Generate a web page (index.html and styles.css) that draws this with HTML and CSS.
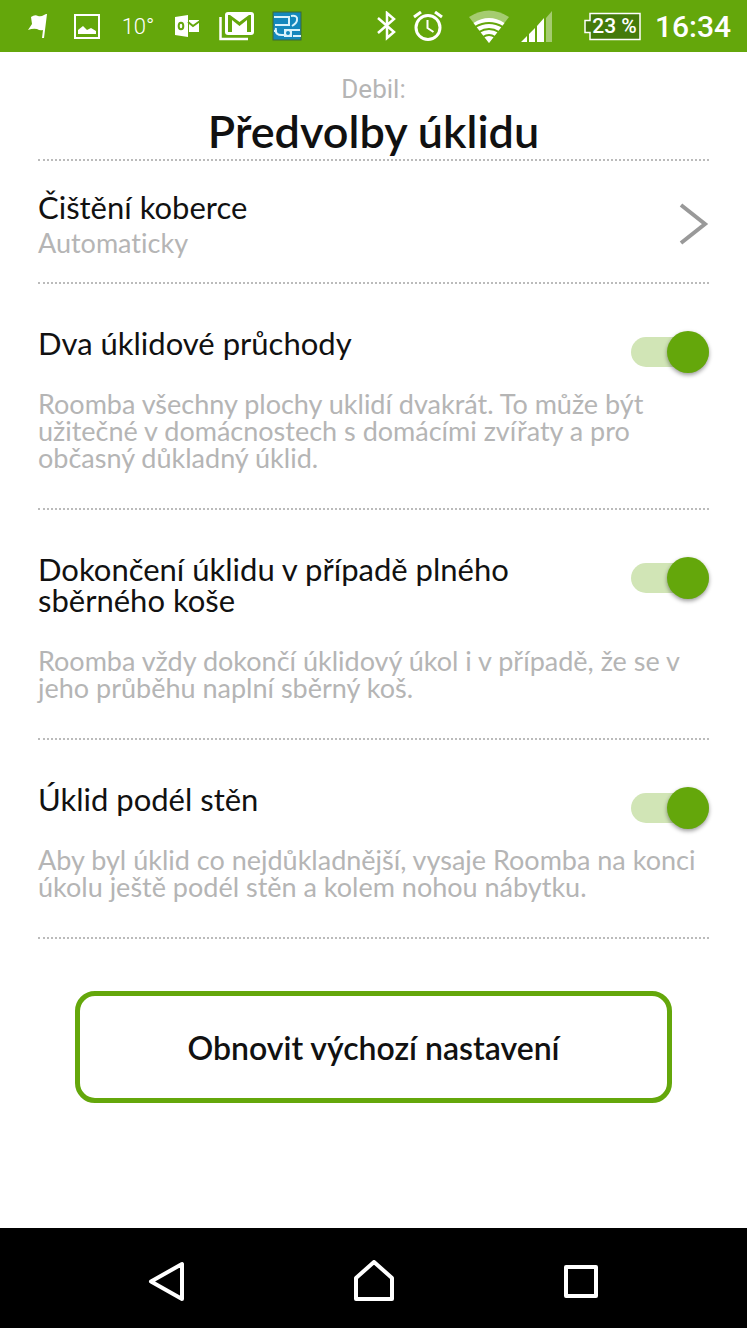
FILE: index.html
```
<!DOCTYPE html>
<html lang="cs">
<head>
<meta charset="utf-8">
<meta name="viewport" content="width=device-width, initial-scale=1">
<title>Předvolby úklidu</title>
<link rel="stylesheet" href="styles.css">
</head>
<body>
<header class="status">
  <div class="status-left">
    <svg width="30" height="30" viewBox="0 0 30 30" fill="#fff"><path d="M3 6q4-3 7-1 3 1 6-1l2-1h1l-3 24h-2l1-8q-3 1-6-1-4-1-9 1l4-6z"/></svg>
    <svg width="30" height="30" viewBox="0 0 30 30" fill="none"><path d="M1 4h24v23H1z" stroke="#fff" stroke-width="2"/><path d="M4 23v-4l5-4 4 4 4-2 5 3v3z" fill="#fff"/></svg>
    <span class="temp">10°</span>
    <svg width="31" height="30" viewBox="0 0 31 30"><path d="M3 6l13-2v22L3 24z" fill="#fff"/><ellipse cx="9" cy="15" rx="2.300" ry="3.300" fill="none" stroke="#64a70b" stroke-width="2"/><path d="M17 9h10v12H17z" fill="#fff"/><path d="M16 11l5 4 7-5" fill="none" stroke="#64a70b" stroke-width="2"/></svg>
    <svg width="37" height="30" viewBox="0 0 37 30"><rect x="6" y="1" width="29" height="23" rx="3" fill="#fff"/><path d="M1.500 6v22H29" fill="none" stroke="#fff" stroke-width="2.500"/><path d="M9 21V4h2l9.500 7L30 4h2v17h-4V9l-7.500 6L13 9v12z" fill="#64a70b"/></svg>
    <svg width="30" height="30" viewBox="0 0 30 30" fill="none"><rect x="1" y="1" width="28" height="28" fill="#1488bd" stroke="#3d6a35"/><path d="M2 6h15v8H3M19 5q7-1 6 4 0 3-5 6M17 19h11M4 17q-2 8 8 7M21 25h8M2 20h3" stroke="#d9f3fb" stroke-width="2"/><path d="M12 18h8v8h-8z" fill="#d9f3fb"/><circle cx="16" cy="22" r="2" fill="#1488bd"/></svg>
  </div>
  <div class="status-right">
    <svg width="24" height="30" viewBox="0 0 24 30" fill="none" stroke="#fff" stroke-width="2.500"><path d="M1 7l16 14-7 6V2l7 6L1 22"/></svg>
    <svg width="30" height="30" viewBox="0 0 30 30" fill="none" stroke="#fff" stroke-width="3"><circle cx="15" cy="16.500" r="12"/><path d="M1 6l7-5M29 6l-7-5"/><path d="M14.500 9v8l6 4" stroke-width="2"/></svg>
    <svg width="54" height="36" viewBox="0 0 54 36"><path d="M34 35L14 9q20-13 40 0z" fill="#a5cc70"/><path d="M34 35L18.500 15q15.500-10 31 0z" fill="#fff"/><path d="M20 19q14-8 28 0M24 24q10-6 20 0M28 29q6-4 12 0" fill="none" stroke="#64a70b" stroke-width="2"/></svg>
    <svg width="51" height="34" viewBox="0 0 51 34"><path d="M25 9l6-7v31h-6z" fill="#a5cc70"/><path d="M0 33l6-6v6zM8 25l6-6v14H8zM16 17l7-8v24h-7z" fill="#fff"/></svg>
    <div class="battery">
      <svg class="battery-shape" width="57" height="29" viewBox="0 0 57 29"><path d="M6 1.500h50v26H6v-7H1V8.500h5z" fill="#447a0a" stroke="#fff" stroke-width="1.500"/></svg>
      <span class="battery-text">23 %</span>
    </div>
    <time class="clock">16:34</time>
  </div>
</header>

<main class="page">
  <div class="heading">
    <p class="device">Debil:</p>
    <h1 class="title">Předvolby úklidu</h1>
  </div>

  <button class="row link-row" type="button">
    <span class="link-text">
      <span class="label">Čištění koberce</span>
      <span class="value">Automaticky</span>
    </span>
    <svg width="30" height="44" viewBox="0 0 30 44" fill="none" stroke="#999" stroke-width="4"><path d="M2 3l24 19L2 41"/></svg>
  </button>

  <section class="row">
    <div class="option">
      <label class="label" for="passes">Dva úklidové průchody</label>
      <input class="switch" id="passes" type="checkbox" role="switch" checked>
    </div>
    <p class="hint">Roomba všechny plochy uklidí dvakrát. To může být užitečné v domácnostech s domácími zvířaty a pro občasný důkladný úklid.</p>
  </section>

  <section class="row">
    <div class="option">
      <label class="label" for="bin">Dokončení úklidu v případě plného sběrného koše</label>
      <input class="switch" id="bin" type="checkbox" role="switch" checked>
    </div>
    <p class="hint">Roomba vždy dokončí úklidový úkol i v případě, že se v jeho průběhu naplní sběrný koš.</p>
  </section>

  <section class="row">
    <div class="option">
      <label class="label" for="edges">Úklid podél stěn</label>
      <input class="switch" id="edges" type="checkbox" role="switch" checked>
    </div>
    <p class="hint">Aby byl úklid co nejdůkladnější, vysaje Roomba na konci úkolu ještě podél stěn a kolem nohou nábytku.</p>
  </section>

  <div class="actions">
    <button class="reset" type="button">Obnovit výchozí nastavení</button>
  </div>
</main>

<nav class="navbar">
  <button class="nav-button" type="button" aria-label="Zpět"><svg width="44" height="44" viewBox="0 0 44 44"><path d="M37 4v35L6 21.500z"/></svg></button>
  <button class="nav-button" type="button" aria-label="Domů"><svg width="44" height="44" viewBox="0 0 44 44"><path d="M4 39V18L22 2l18 16v21z"/></svg></button>
  <button class="nav-button" type="button" aria-label="Přehled"><svg width="44" height="44" viewBox="0 0 44 44"><path d="M7 7h30v29H7z"/></svg></button>
</nav>
</body>
</html>
```
FILE: styles.css
```
* {
  box-sizing: border-box;
}

body {
  margin: 0;
  min-height: 100vh;
  display: flex;
  flex-direction: column;
  background: #fff;
  color: #111;
  font-family: Lato, "Noto Sans", sans-serif;
  font-variant-ligatures: none;
}

p,
h1 {
  margin: 0;
}

button {
  font: inherit;
  font-variant-ligatures: none;
  color: inherit;
  background: none;
  border: 0;
  padding: 0;
  cursor: pointer;
}

svg {
  display: block;
  flex: none;
}

.status {
  height: 52px;
  padding: 0 16px 0 28px;
  display: flex;
  align-items: center;
  justify-content: space-between;
  background: #64a70b;
  color: #fff;
}

.status-left,
.status-right {
  display: flex;
  align-items: center;
  gap: 16px;
}

.status-right {
  gap: 12px;
  font-family: Roboto, sans-serif;
}

.temp {
  width: 36px;
  text-align: center;
  font-family: Roboto, sans-serif;
  font-size: 22px;
  font-weight: 300;
}

.battery {
  position: relative;
  width: 57px;
  height: 29px;
  display: grid;
  place-items: center;
}

.battery-shape {
  position: absolute;
  inset: 0;
}

.battery-text {
  position: relative;
  padding-left: 4px;
  font-size: 21px;
  font-weight: 500;
  white-space: nowrap;
}

.clock {
  width: 78px;
  text-align: right;
  font-size: 30px;
  font-weight: 500;
}

.page {
  flex: 1;
  padding: 22px 38px 0;
}

.heading {
  padding-bottom: 1px;
  text-align: center;
}

.device {
  font-family: Roboto, sans-serif;
  font-size: 26px;
  line-height: 30px;
  color: #b5b5b5;
}

.title {
  font-size: 45px;
  line-height: 54px;
  font-weight: 600;
}

.row {
  border-top: 2px dotted #bbb;
  padding: 44px 0 37px;
}

section.row:last-of-type {
  border-bottom: 2px dotted #bbb;
}

.link-row {
  width: 100%;
  padding: 31px 0 26px;
  display: flex;
  align-items: center;
  justify-content: space-between;
  text-align: left;
}

.link-text {
  display: grid;
  gap: 6px;
}

.label {
  font-size: 31px;
  line-height: 31px;
}

.value,
.hint {
  font-size: 27px;
  line-height: 27px;
  color: #b5b5b5;
}

.option {
  display: flex;
  align-items: flex-start;
  justify-content: space-between;
  gap: 64px;
  margin-bottom: 31px;
}

.switch {
  appearance: none;
  flex: none;
  width: 78px;
  height: 30px;
  margin: 9px 0 -8px;
  display: flex;
  align-items: center;
  justify-content: flex-end;
  border-radius: 16px;
  background: #d1e5b6;
  cursor: pointer;
}

.switch::before {
  content: "";
  width: 42px;
  height: 42px;
  flex: none;
  border-radius: 50%;
  background: #64a70b;
  box-shadow: 0 2px 4px #0006;
}

.switch:not(:checked) {
  justify-content: flex-start;
}

.actions {
  padding: 52px 37px;
}

.reset {
  width: 100%;
  height: 112px;
  border: 5px solid #64a70b;
  border-radius: 20px;
  font-size: 32px;
  font-weight: 600;
}

.navbar {
  height: 100px;
  padding-top: 7px;
  display: flex;
  align-items: center;
  justify-content: center;
  gap: 163px;
  background: #000;
}

.nav-button svg {
  fill: none;
  stroke: #fff;
  stroke-width: 4;
  stroke-linejoin: round;
}
```
